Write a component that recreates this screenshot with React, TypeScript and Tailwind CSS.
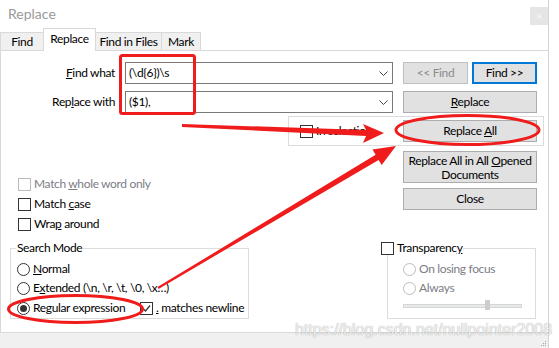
import React from "react";

const RED = "#f01c1c";

function Check({ checked = false, disabled = false }: { checked?: boolean; disabled?: boolean }) {
  return (
    <span
      className={`flex h-[13px] w-[13px] shrink-0 items-center justify-center border bg-white ${
        disabled ? "border-[#bcbcbc]" : "border-[#333333]"
      }`}
    >
      {checked && (
        <svg width="9" height="9" viewBox="0 0 9 9">
          <path d="M1 4.5 L3.5 7 L8 1.5" fill="none" stroke="#333" strokeWidth="1.2" />
        </svg>
      )}
    </span>
  );
}

function Radio({ checked = false, disabled = false }: { checked?: boolean; disabled?: boolean }) {
  return (
    <span
      className={`flex h-[13px] w-[13px] shrink-0 items-center justify-center rounded-full border bg-white ${
        disabled ? "border-[#bcbcbc]" : "border-[#333333]"
      }`}
    >
      {checked && <span className="h-[7px] w-[7px] rounded-full bg-[#333333]" />}
    </span>
  );
}

function Btn({ children, className = "" }: { children: React.ReactNode; className?: string }) {
  return (
    <div className={`flex items-center justify-center bg-[#e1e1e1] text-center ${className}`}>{children}</div>
  );
}

function Combo({ value }: { value: string }) {
  return (
    <div className="flex h-[22px] w-[268px] items-center border border-[#7a7a7a] bg-white pl-[3px] pr-[4px]">
      <span className="flex-1">{value}</span>
      <svg width="9" height="5" viewBox="0 0 9 5">
        <path d="M0.5 0.5 L4.5 4.5 L8.5 0.5" fill="none" stroke="#444" />
      </svg>
    </div>
  );
}

export default function App() {
  return (
    <div className="relative h-[348px] w-[559px] overflow-hidden whitespace-nowrap bg-white font-[Lato,sans-serif] text-[12px] leading-[14px] tracking-[-0.35px] text-black">
      <div className="flex h-full w-[549px] flex-col border-r border-[#d4d4d4]">
        {/* title bar */}
        <div className="flex h-[28px] shrink-0 items-start justify-between">
          <span className="ml-[8px] mt-[6px] text-[14px] leading-[16px] tracking-normal text-[#9a9a9a]">Replace</span>
          <div className="mt-[7px] flex h-[18px] w-[18px] items-center justify-center bg-[#e5e5e5] text-[12px] leading-none text-[#f8f8f8]">
            ×
          </div>
        </div>

        {/* tabs */}
        <div className="flex h-[22px] shrink-0 items-end">
          <div className="flex h-[18px] w-[43px] items-center justify-center border-l border-t border-[#d9d9d9] bg-[#f0f0f0]">
            Find
          </div>
          <div className="relative z-10 -mb-px flex h-[23px] w-[53px] items-start justify-center border-x border-t border-[#d9d9d9] bg-white pt-[3px]">
            Replace
          </div>
          <div className="flex h-[18px] w-[66px] items-center justify-center border-r border-t border-[#d9d9d9] bg-[#f0f0f0]">
            Find in Files
          </div>
          <div className="flex h-[18px] w-[39px] items-center justify-center border-r border-t border-[#d9d9d9] bg-[#f0f0f0]">
            Mark
          </div>
        </div>

        {/* panel */}
        <div className="flex h-[283px] shrink-0 flex-col border-y border-l border-[#d9d9d9]">
          <div className="mt-[11px] flex h-[22px] items-center">
            <span className="w-[114px] text-right">
              <u>F</u>ind what
            </span>
            <div className="ml-[10px]">
              <Combo value={"(\\d{6})\\s"} />
            </div>
            <Btn className="ml-[10px] h-[22px] w-[65px] border border-[#bfbfbf] bg-[#cccccc] text-[#8c8c8c]">
              &lt;&lt; Find
            </Btn>
            <Btn className="ml-[4px] h-[22px] w-[65px] border-2 border-[#0078d7]">Find &gt;&gt;</Btn>
          </div>

          <div className="mt-[7px] flex h-[22px] items-center">
            <span className="w-[114px] text-right">
              Rep<u>l</u>ace with
            </span>
            <div className="ml-[10px]">
              <Combo value="($1)," />
            </div>
            <Btn className="ml-[10px] h-[22px] w-[134px] border border-[#adadad]">
              <span>
                <u>R</u>eplace
              </span>
            </Btn>
          </div>

          <div className="ml-[287px] mt-[3px] flex h-[30px] w-[256px] items-center border border-[#dcdcdc] pl-[11px] pr-[6px]">
            <Check />
            <span className="ml-[3px]">In selection</span>
            <Btn className="ml-auto h-[22px] w-[134px] border border-[#adadad]">
              <span>
                Replace <u>A</u>ll
              </span>
            </Btn>
          </div>

          <div className="flex h-[102px]">
            <div className="flex flex-1 flex-col gap-[6px] pl-[17px] pt-[31px]">
              <div className="flex h-[14px] items-center gap-[3px] text-[#7d7d86]">
                <Check disabled />
                <span>
                  Match <u>w</u>hole word only
                </span>
              </div>
              <div className="flex h-[14px] items-center gap-[3px]">
                <Check />
                <span>
                  Match <u>c</u>ase
                </span>
              </div>
              <div className="flex h-[14px] items-center gap-[3px]">
                <Check />
                <span>
                  Wra<u>p</u> around
                </span>
              </div>
            </div>
            <div className="mr-[11px] flex w-[134px] flex-col gap-[5px] pt-[5px]">
              <Btn className="h-[32px] flex-col border border-[#adadad]">
                <span className="leading-[14px]">
                  Replace All in All <u>O</u>pened
                </span>
                <span className="leading-[13px]">Documents</span>
              </Btn>
              <Btn className="h-[22px] border border-[#adadad]">Close</Btn>
            </div>
          </div>

          <div className="flex items-start">
            {/* search mode */}
            <div className="ml-[9px] h-[71px] w-[239px] border border-[#dcdcdc]">
              <div className="-mt-[8px] ml-[5px] w-fit bg-white px-[1px]">Search Mode</div>
              <div className="ml-[6px] mt-[7px] flex h-[14px] items-center gap-[3px]">
                <Radio />
                <span>
                  <u>N</u>ormal
                </span>
              </div>
              <div className="ml-[6px] mt-[5px] flex h-[14px] items-center gap-[3px]">
                <Radio />
                <span>
                  E<u>x</u>tended (\n, \r, \t, \0, \x…)
                </span>
              </div>
              <div className="ml-[6px] mt-[6px] flex h-[14px] items-center">
                <div className="flex w-[123px] items-center gap-[3px]">
                  <Radio checked />
                  <span>
                    Re<u>g</u>ular expression
                  </span>
                </div>
                <Check checked />
                <span className="ml-[3px]">
                  <u>.</u> matches newline
                </span>
              </div>
            </div>

            {/* transparency */}
            <div className="ml-[138px] h-[71px] w-[149px] border border-[#dcdcdc]">
              <div className="-ml-[7px] -mt-[8px] flex h-[14px] w-fit items-center gap-[3px] bg-white pr-[1px]">
                <Check />
                <span>
                  Transparenc<u>y</u>
                </span>
              </div>
              <div className="ml-[15px] mt-[7px] flex h-[14px] items-center gap-[3px] text-[#7d7d86]">
                <Radio disabled />
                <span>On losing focus</span>
              </div>
              <div className="ml-[15px] mt-[5px] flex h-[14px] items-center gap-[3px] text-[#7d7d86]">
                <Radio disabled />
                <span>Always</span>
              </div>
              <div className="relative ml-[15px] mt-[9px] h-[4px] w-[119px] border border-[#d6d6d6] bg-[#e7eaea]">
                <div className="absolute left-[81px] top-[-5px] h-[10px] w-[5px] bg-[#cdcdcd]" />
              </div>
            </div>
          </div>
        </div>

        {/* status strip */}
        <div className="flex flex-1 items-end justify-end bg-[#f0f0f0] pb-[1px] pr-[1px]">
          <svg width="6" height="6" viewBox="0 0 6 6">
            <rect x="4" y="0" width="1" height="1" fill="#a0a0a0" />
            <rect x="2" y="2" width="1" height="1" fill="#a0a0a0" />
            <rect x="4" y="2" width="1" height="1" fill="#a0a0a0" />
            <rect x="0" y="4" width="1" height="1" fill="#a0a0a0" />
            <rect x="2" y="4" width="1" height="1" fill="#a0a0a0" />
            <rect x="4" y="4" width="1" height="1" fill="#a0a0a0" />
          </svg>
        </div>
      </div>

      {/* watermark */}
      <div className="pointer-events-none absolute left-[295px] top-[321px] font-['Liberation_Sans',sans-serif] text-[16px] leading-[18px] tracking-normal text-[rgba(255,255,255,0.85)] [text-shadow:0_0_1px_rgba(0,0,0,0.45)]">
        https://blog.csdn.net/nullpointer2008
      </div>

      {/* annotations */}
      <svg className="pointer-events-none absolute inset-0" width="559" height="348" viewBox="0 0 559 348">
        <rect x="120.5" y="55.5" width="74" height="58" rx="2" fill="none" stroke={RED} strokeWidth="3" />
        <polygon points="182,124 366,130 363,124 384,133 363,143 366,136 182,127" fill={RED} />
        <polygon
          points="158.5,288.9 378.6,159.9 381.7,165 396,146 372.5,149.6 375.6,154.7 157.5,287.1"
          fill={RED}
        />
        <ellipse cx="467.5" cy="130" rx="71.5" ry="14.5" fill="none" stroke={RED} strokeWidth="3" />
        <ellipse cx="75.5" cy="309" rx="67" ry="13.5" fill="none" stroke={RED} strokeWidth="3" />
      </svg>
    </div>
  );
}
